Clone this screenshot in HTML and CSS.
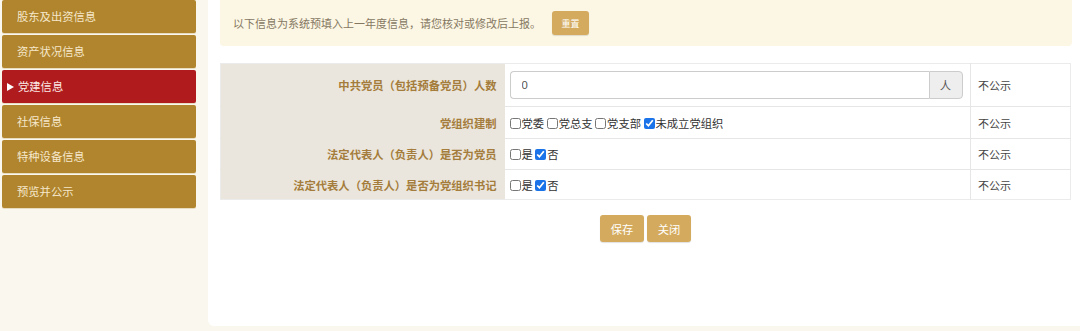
FILE: index.html
```
<!doctype html>
<html lang="zh">
 <head>
  <meta charset="UTF-8">
  <link rel="stylesheet" href="styles.css">
  <title>党建信息</title>
 </head>
 <body>
  <div class="page">
   <aside class="side">
    <a class="menu" href="#">股东及出资信息</a>
    <a class="menu" href="#">资产状况信息</a>
    <a class="menu on" href="#">党建信息</a>
    <a class="menu" href="#">社保信息</a>
    <a class="menu" href="#">特种设备信息</a>
    <a class="menu" href="#">预览并公示</a>
   </aside>
   <section class="main">
    <div class="tip">
     <span>以下信息为系统预填入上一年度信息，请您核对或修改后上报。</span>
     <button class="btn btn-sm">重置</button>
    </div>
    <table class="info">
     <tr class="r1">
      <td class="lbl">中共党员（包括预备党员）人数</td>
      <td class="val">
       <div class="ipt-group">
        <input class="ipt" type="text" value="0">
        <span class="addon">人</span>
       </div>
      </td>
      <td class="pub">不公示</td>
     </tr>
     <tr class="r2">
      <td class="lbl">党组织建制</td>
      <td class="val">
       <label><input type="checkbox">党委</label>
       <label><input type="checkbox">党总支</label>
       <label><input type="checkbox">党支部</label>
       <label><input type="checkbox" checked>未成立党组织</label>
      </td>
      <td class="pub">不公示</td>
     </tr>
     <tr class="r3">
      <td class="lbl">法定代表人（负责人）是否为党员</td>
      <td class="val">
       <label><input type="checkbox">是</label>
       <label><input type="checkbox" checked>否</label>
      </td>
      <td class="pub">不公示</td>
     </tr>
     <tr class="r4">
      <td class="lbl">法定代表人（负责人）是否为党组织书记</td>
      <td class="val">
       <label><input type="checkbox">是</label>
       <label><input type="checkbox" checked>否</label>
      </td>
      <td class="pub">不公示</td>
     </tr>
    </table>
    <div class="ops">
     <button class="btn">保存</button>
     <button class="btn">关闭</button>
    </div>
   </section>
  </div>
 </body>
</html>
```

FILE: styles.css
```
body{margin:0;padding:0;background:#faf7ee;font-family:"Noto Sans CJK SC","Liberation Sans",sans-serif;}
.page{display:flex;height:331px;overflow:hidden;}

/* 左侧菜单 */
.side{width:208px;flex:none;padding:0 12px 0 2px;box-sizing:border-box;display:flex;flex-direction:column;gap:2px;}
.menu{
    display:block;height:33px;line-height:33px;
    padding-left:15px;
    background:#b0852e;color:#f6e8cc;
    font-size:11.3px;text-decoration:none;
    border-radius:2px;
    box-shadow:0 1px 0 #e8dcc0;
}
.menu.on{background:#b01c1e;color:#fbe9e4;padding-left:5px;}
.menu.on:before{content:"";display:inline-block;width:0;height:0;border-left:7px solid #fff;border-top:4.5px solid transparent;border-bottom:4.5px solid transparent;margin-right:4px;vertical-align:0;}

/* 主体 */
.main{flex:1;background:#fff;height:326px;padding:0 8px 0 12px;border-radius:0 0 0 6px;box-sizing:border-box;}
.tip{
    height:46px;background:#fcf6e4;border-radius:0 0 4px 4px;
    display:flex;align-items:center;padding:0 13px;
    font-size:11px;color:#857862;
}
.tip span{margin-right:11px;}
.btn{
    border:0;outline:none;border-radius:3px;
    background:#d4ab5e;color:#fff;
    font:11.3px "Noto Sans CJK SC",sans-serif;
    width:44px;height:27px;padding:0;
    box-shadow:0 1px 1px rgba(0,0,0,0.12);
}
.btn-sm{width:37px;height:24px;font-size:9px;}

.info{width:851px;margin-top:17px;border-collapse:collapse;font-size:11.3px;border:1px solid #ebebeb;}
.info td{border-bottom:1px solid #e6e6e6;padding:0;}
.info tr:last-child td{border-bottom:0;}
.r1{height:43px;}
.r2{height:32px;}
.r3{height:31px;}
.r4{height:30px;}
.lbl{width:284px;background:#ebe6dd;color:#a47c3b;font-weight:bold;text-align:right;padding-right:8px !important;box-sizing:border-box;}
.info .lbl{border-bottom-color:#ebe6dd;}
.val{width:466px;padding-left:5px !important;color:#333;box-sizing:border-box;border-right:1px solid #e6e6e6;}
.pub{padding-left:7px !important;color:#444;font-size:11px;}
.val input[type=checkbox]{width:11px;height:11px;margin:0 1px 0 0;vertical-align:-1px;accent-color:#1a73e8;}

.ipt-group{display:flex;height:28px;width:453px;}
.ipt{flex:1;border:1px solid #ccc;border-right:0;border-radius:4px 0 0 4px;padding:0 11px;font-size:11.3px;color:#555;outline:none;}
.addon{width:32px;border:1px solid #ccc;border-radius:0 4px 4px 0;background:#eee;color:#555;display:flex;align-items:center;justify-content:center;font-size:11.3px;}

.ops{display:flex;justify-content:center;gap:3px;margin-top:15px;width:851px;}
```
